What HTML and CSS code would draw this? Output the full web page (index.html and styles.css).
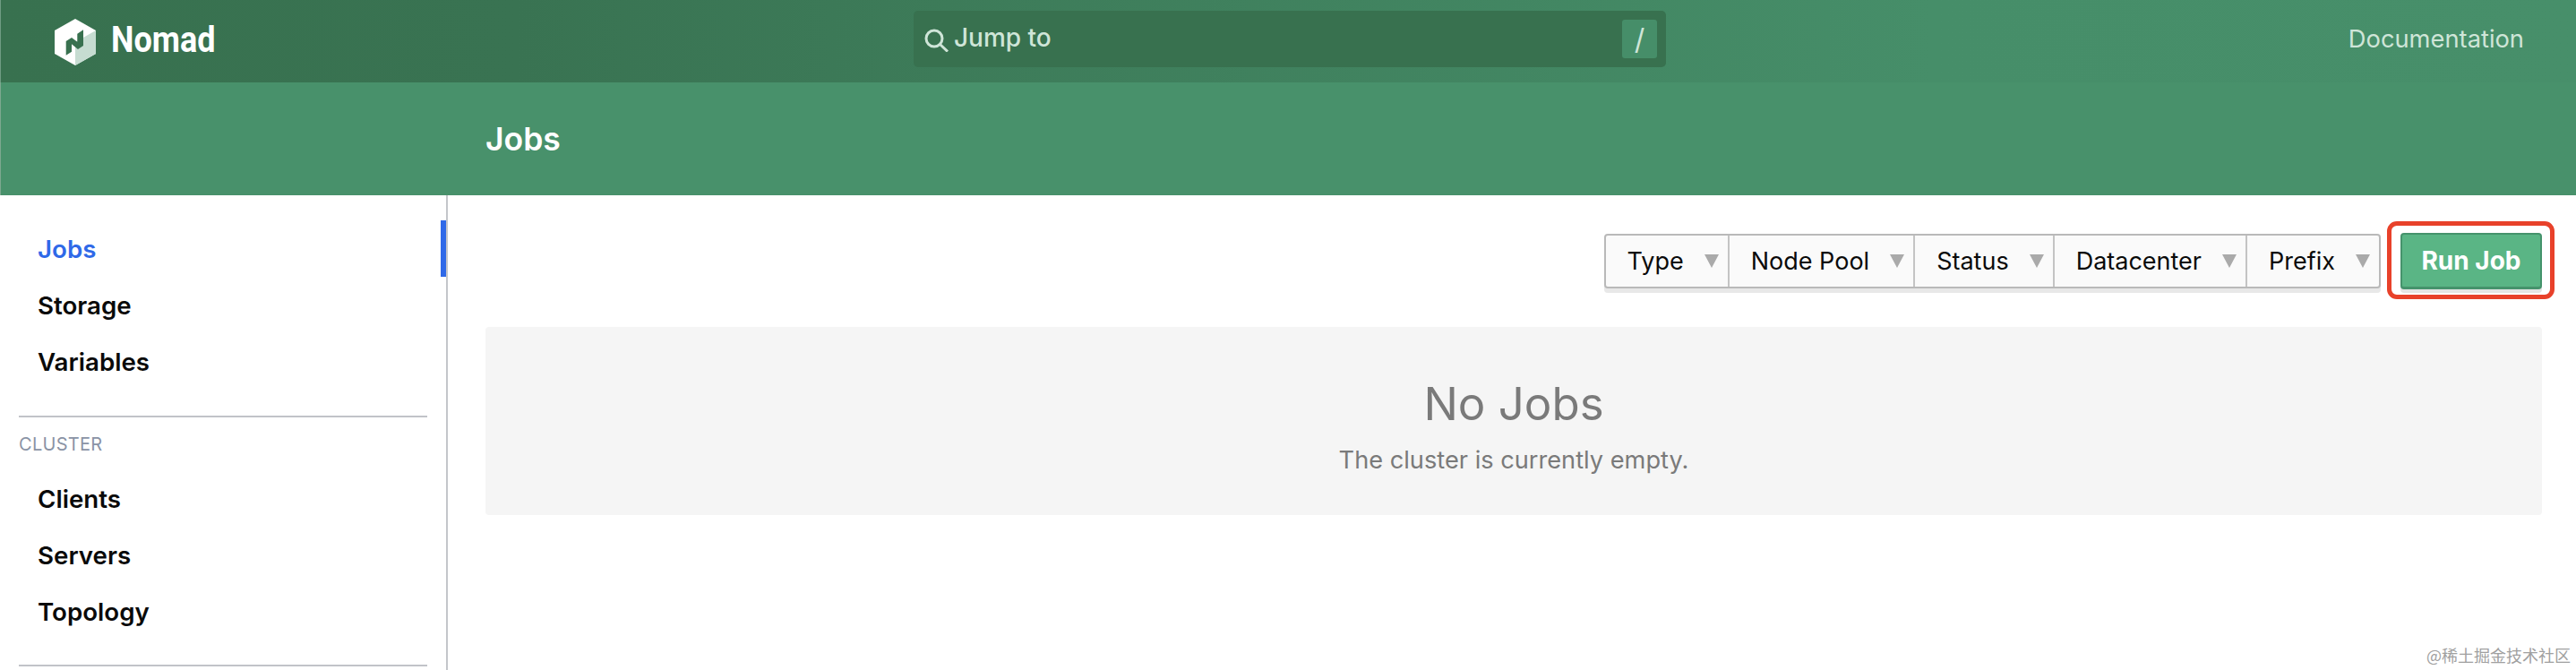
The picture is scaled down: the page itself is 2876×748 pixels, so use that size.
FILE: index.html
```html
<!DOCTYPE html>
<html lang="en">
<head>
<meta charset="utf-8">
<title>Jobs - Nomad</title>
<link rel="stylesheet" href="styles.css">
</head>
<body>
<div class="app">
  <header class="topbar">
    <div class="brand-col">
      <a class="brand">
        <svg class="logo" viewBox="0 0 46 52" aria-hidden="true">
          <path class="logo-white" d="M23 0 46 13V39L23 52 0 39V13Z"/>
          <path class="logo-shade" d="M23 52 46 39V13L23 26Z"/>
          <path class="logo-mark" d="M25.3 16.7 32 12.3V30L26 34 19 28.3V36.7L12.7 40.7V25L19 21 25.3 25.7Z"/>
        </svg>
        <span class="brand-name">Nomad</span>
      </a>
    </div>
    <div class="search">
      <svg class="search-icon" viewBox="0 0 28 26" aria-hidden="true">
        <circle cx="11" cy="11" r="9" />
        <path d="M17.5 17.5 26 25.5"/>
      </svg>
      <span class="search-text">Jump to</span>
      <span class="search-key">/</span>
    </div>
    <nav class="top-nav"><a class="doc-link">Documentation</a></nav>
  </header>
  <div class="subbar"><h1 class="page-title">Jobs</h1></div>
  <div class="layout">
    <aside class="sidebar">
      <ul class="menu">
        <li class="menu-item is-active">Jobs</li>
        <li class="menu-item">Storage</li>
        <li class="menu-item">Variables</li>
      </ul>
      <hr class="divider">
      <p class="menu-label">CLUSTER</p>
      <ul class="menu">
        <li class="menu-item">Clients</li>
        <li class="menu-item">Servers</li>
        <li class="menu-item">Topology</li>
      </ul>
      <hr class="divider second">
    </aside>
    <main class="content">
      <div class="toolbar">
        <div class="filters">
          <button class="filter"><span>Type</span><i class="caret"></i></button>
          <button class="filter"><span>Node Pool</span><i class="caret"></i></button>
          <button class="filter"><span>Status</span><i class="caret"></i></button>
          <button class="filter"><span>Datacenter</span><i class="caret"></i></button>
          <button class="filter"><span>Prefix</span><i class="caret"></i></button>
        </div>
        <div class="run-wrap">
          <button class="run-job">Run Job</button>
          <span class="annotation"></span>
        </div>
      </div>
      <section class="empty">
        <h2 class="empty-title">No Jobs</h2>
        <p class="empty-text">The cluster is currently empty.</p>
      </section>
    </main>
  </div>
  <span class="watermark">@稀土掘金技术社区</span>
</div>
</body>
</html>
```
FILE: styles.css
```css
* { box-sizing: border-box; }
html, body { margin: 0; padding: 0; background: #fff; }
body { font-family: Inter, "Liberation Sans", "Noto Sans CJK SC", sans-serif; color: #0a0a0a; }
.app { position: relative; width: 2876px; height: 748px; overflow: hidden; }

.topbar {
  display: flex; align-items: center; height: 92px;
  background: linear-gradient(to right, #38714f 0%, #397352 20%, #468e69 75%, #478f6a 100%);
  border-left: 1px solid #6f9c83;
}
.brand-col { width: 1019px; padding-left: 60px; }
.brand { display: flex; align-items: center; gap: 17px; }
.logo { width: 46px; height: 52px; display: block; margin-top: 1px; }
.logo-white { fill: #fff; }
.logo-shade { fill: #c6dcd1; }
.logo-mark { fill: #38714f; }
.brand-name {
  font-family: Roboto, "Liberation Sans", sans-serif; font-weight: 700;
  font-size: 40px; line-height: 1; color: #fff; margin-top: -3px;
  transform: scaleX(.9); transform-origin: left center;
}
.search {
  display: flex; align-items: center; width: 840px; height: 63px; margin-top: -5px;
  padding: 0 10px 0 12px; background: #38714f; border-radius: 5px; color: #cfe5d8;
}
.search-icon { width: 28px; height: 26px; fill: none; stroke: #cfe5d8; stroke-width: 3; margin-top: 2px; }
.search-text { flex: 1; margin-left: 5px; font-size: 28px; font-weight: 500; margin-top: -4px; }
.search-key {
  display: flex; align-items: center; justify-content: center;
  width: 39px; height: 43px; background: #468e69; border-radius: 3px;
  font-size: 32px;
}
.top-nav { flex: 1; display: flex; justify-content: flex-end; padding-right: 58px; }
.doc-link { font-size: 27.3px; color: #cfe5d8; margin-top: -5px; }

.subbar {
  display: flex; align-items: center; height: 126px; padding-left: 541px;
  background: #48916b; border-left: 1px solid #7da88f;
}
.page-title { margin: 0; font-size: 35.5px; font-weight: 600; color: #fff; }

.layout { display: flex; }
.sidebar { width: 500px; height: 530px; padding-top: 28px; border-right: 2px solid #c4c6ca; }
.menu { list-style: none; margin: 0; padding: 0; }
.menu-item {
  display: flex; align-items: center; height: 63px; padding-left: 42px;
  font-size: 27.7px; font-weight: 600; color: #0a0a0a;
}
.is-active { color: #2f69e8; box-shadow: inset -6px 0 0 #2f69e8; }
.divider { width: 456px; height: 2px; margin: 29px 0 0 21px; border: 0; background: #c1c3c8; }
.divider.second { margin-top: 28px; }
.menu-label {
  margin: 0; padding: 0 0 0 21px; height: 59px; display: flex; align-items: center;
  font-size: 20px; color: #8a93a5; letter-spacing: .3px;
}

.content { flex: 1; padding: 42px 38px 0 42px; }
.toolbar { display: flex; justify-content: flex-end; align-items: center; gap: 22px; }
.filters {
  display: flex; height: 61px; background: #fafafa; border: 2px solid #b9b9b9; border-radius: 4px;
  box-shadow: 0 5px 0 #e8e8e8;
}
.filter {
  display: flex; align-items: center; gap: 23px; height: 100%; padding: 0 10px 0 24px;
  background: transparent; border: 0; border-right: 2px solid #c4c4c4;
  font: 400 27px Inter, "Liberation Sans", sans-serif; color: #0a0a0a;
}
.filter:last-child { border-right: 0; }
.caret {
  width: 0; height: 0;
  border-left: 8px solid transparent; border-right: 8px solid transparent; border-top: 15px solid #aaa;
}
.run-wrap { position: relative; }
.run-job {
  display: block; width: 158px; height: 63px; padding: 0;
  background: #5ab585; border: 2px solid #45936c; border-bottom-width: 3px; border-radius: 4px;
  box-shadow: 0 4px 0 #e4e4e4;
  font: 700 28px Inter, "Liberation Sans", sans-serif; color: #fff;
}
.annotation {
  position: absolute; top: -13px; right: -14px; bottom: -11px; left: -15px;
  border: 5px solid #e8412a; border-radius: 11px;
}
.empty {
  display: flex; flex-direction: column; align-items: center;
  height: 210px; margin-top: 42px; padding-top: 54px;
  background: #f5f5f5; border-radius: 4px; color: #7a7a7a;
}
.empty-title { margin: 0; font-size: 51px; font-weight: 400; line-height: 64px; color: #7a7a7a; }
.empty-text { margin: 13px 0 0; font-size: 27.2px; line-height: 36px; }

.watermark {
  position: absolute; right: 6px; bottom: 8px;
  font-family: "Noto Sans CJK SC", sans-serif; font-size: 18px; color: #a0a0a0; line-height: 18px;
}
```
